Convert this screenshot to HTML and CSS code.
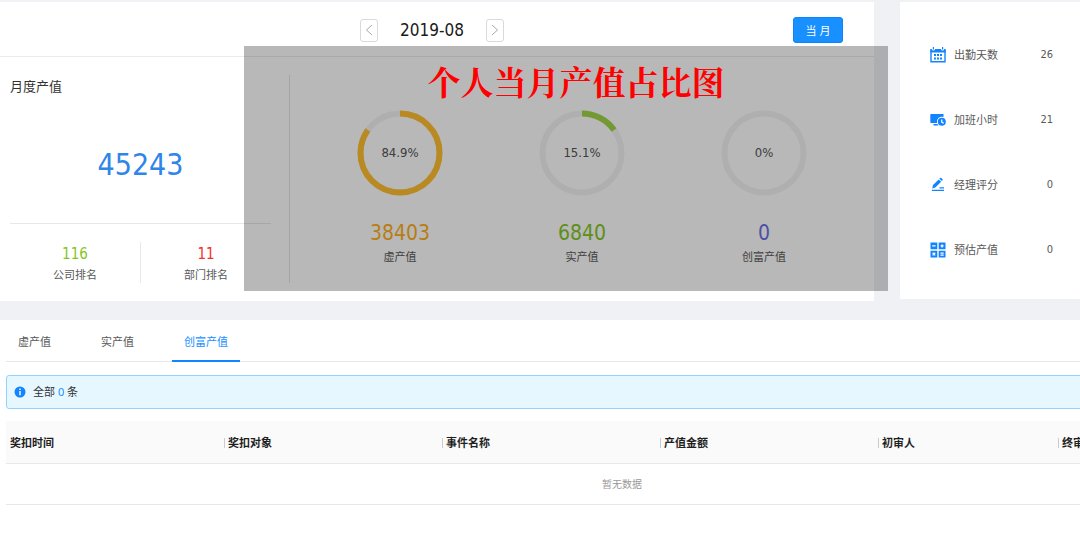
FILE: index.html
```html
<!DOCTYPE html>
<html lang="zh-CN">
<head>
<meta charset="utf-8">
<title>月度产值</title>
<meta name="viewport" content="width=device-width, initial-scale=1">
<link rel="stylesheet" href="styles.css">
</head>
<body>
<div class="top">
  <main class="card summary">
    <header class="month-bar">
      <div class="month-nav">
        <button class="arrow" type="button" aria-label="上个月"><svg width="10" height="14" viewBox="0 0 10 14"><path d="M8 2 2.500 7 8 12"/></svg></button>
        <h1 class="month">2019-08</h1>
        <button class="arrow" type="button" aria-label="下个月"><svg width="10" height="14" viewBox="0 0 10 14"><path d="M2 2 7.500 7 2 12"/></svg></button>
      </div>
      <button class="current" type="button">当 月</button>
    </header>
    <div class="summary-body">
      <section class="total">
        <h2 class="total-title">月度产值</h2>
        <div class="total-value">45243</div>
        <div class="ranks">
          <div class="rank"><b class="rank-value green">116</b><span>公司排名</span></div>
          <div class="rank"><b class="rank-value red">11</b><span>部门排名</span></div>
        </div>
      </section>
      <section class="rings">
        <div class="ring-item">
          <div class="ring">
            <svg viewBox="0 0 86 86"><circle class="track" cx="43" cy="43" r="39.500"/><circle class="arc arc-gold" cx="43" cy="43" r="39.500" pathLength="100" stroke-dasharray="84.900 100"/></svg>
            <span class="percent">84.9%</span>
          </div>
          <b class="ring-value gold">38403</b><span>虚产值</span>
        </div>
        <div class="ring-item">
          <div class="ring">
            <svg viewBox="0 0 86 86"><circle class="track" cx="43" cy="43" r="39.500"/><circle class="arc arc-green" cx="43" cy="43" r="39.500" pathLength="100" stroke-dasharray="15.100 100"/></svg>
            <span class="percent">15.1%</span>
          </div>
          <b class="ring-value green">6840</b><span>实产值</span>
        </div>
        <div class="ring-item">
          <div class="ring">
            <svg viewBox="0 0 86 86"><circle class="track" cx="43" cy="43" r="39.500"/></svg>
            <span class="percent">0%</span>
          </div>
          <b class="ring-value indigo">0</b><span>创富产值</span>
        </div>
      </section>
    </div>
    <div class="highlight">个人当月产值占比图</div>
  </main>
  <aside class="card facts">
    <div class="fact">
      <svg class="icon" viewBox="0 0 16 16"><path fill="none" stroke="currentColor" stroke-width="1.400" d="M1 2.600V14.700H15V2.600"/><path d="M.4 2h1.400a1.600 1.600 0 0 0 3.200 0h6a1.600 1.600 0 0 0 3.200 0h1.400v3.400H.4zM2.800 0h1.200v2.400H2.800zM12 0h1.200v2.400H12zM4 7h2v2H4zm3 0h2v2H7zm3 0h2v2h-2zM4 10.400h2v2H4zm3 0h2v2H7zm3 0h2v2h-2z"/></svg>
      <span>出勤天数</span><span class="fact-value">26</span>
    </div>
    <div class="fact">
      <svg class="icon" viewBox="0 0 16 16"><path d="M1 2h12.500v3A5 5 0 0 0 7 11H1a.7.700 0 0 1-.7-.7V2.700A.7.700 0 0 1 1 2zM3.500 12h4l.9 1.500H3.500z"/><path fill-rule="evenodd" d="M11.800 5.800a4 4 0 1 1 0 8 4 4 0 0 1 0-8zm-.7 1.800v2.900l2.300 1.200.6-1-1.600-.9V7.600z"/></svg>
      <span>加班小时</span><span class="fact-value">21</span>
    </div>
    <div class="fact">
      <svg class="icon" viewBox="0 0 16 16"><path d="M2 12.700h12V14H2zM9.500 10.200H14v1.200H9.500zM2.200 11.500l.8-3.400L8.700 2.400l2.500 2.300-5.900 5.900zM9.300 1.800l.8-.8a.8.800 0 0 1 1.100 0l1.300 1.200a.8.800 0 0 1 0 1.100l-.7.800z"/></svg>
      <span>经理评分</span><span class="fact-value">0</span>
    </div>
    <div class="fact">
      <svg class="icon" viewBox="0 0 16 16"><path d="M.5.500h6.800v6.800H.5zM8.700.500h6.800v6.800H8.700zM.5 8.700h6.800v6.800H.5zM8.700 8.700h6.800v6.800H8.700z"/><path fill="none" stroke="#fff" stroke-width="1.300" d="M2.200 3.900h3.400M12.100 2.400v3M10.600 3.900h3M2.600 10.800l2.600 2.600M5.200 10.800l-2.600 2.600M10.500 11.200h3.200M10.500 13.200h3.200"/></svg>
      <span>预估产值</span><span class="fact-value">0</span>
    </div>
  </aside>
</div>
<section class="records">
  <nav class="tabs" role="tablist">
    <button class="tab" type="button" role="tab">虚产值</button>
    <button class="tab" type="button" role="tab">实产值</button>
    <button class="tab active" type="button" role="tab" aria-selected="true">创富产值</button>
  </nav>
  <div class="wide">
    <div class="notice">
      <svg class="info" viewBox="0 0 12 12"><circle cx="6" cy="6" r="5.500"/><path d="M5.300 2.600h1.400V4H5.300zM5.300 5h1.400v4.200H5.300z" fill="#fff"/></svg>
      <span>全部 <em>0</em> 条</span>
    </div>
    <table class="table">
      <colgroup><col class="c"><col class="c"><col class="c"><col class="c"><col class="last"><col></colgroup>
      <thead><tr><th>奖扣时间</th><th>奖扣对象</th><th>事件名称</th><th>产值金额</th><th>初审人</th><th>终审人</th></tr></thead>
      <tbody><tr><td colspan="6">暂无数据</td></tr></tbody>
    </table>
  </div>
</section>
</body>
</html>
```
FILE: styles.css
```css
* { box-sizing: border-box; }
body {
  margin: 0;
  min-height: 100vh;
  display: flex;
  flex-direction: column;
  overflow-x: hidden;
  background: #f0f1f5;
  color: #595959;
  font: 11px/16px "Noto Sans", "Noto Sans CJK SC", sans-serif;
}
button { font: inherit; cursor: pointer; }
h1, h2 { margin: 0; font-weight: 400; }
b, em { font-weight: 400; font-style: normal; }
.month, .total-value, .rank-value, .ring-value, .percent, .fact-value {
  font-family: "DejaVu Sans Condensed", "Noto Sans", sans-serif;
}
.card { background: #fff; }
.top {
  display: flex;
  align-items: flex-start;
  gap: 26px;
  padding-top: 2px;
}

.summary { position: relative; flex: 1; min-width: 0; }
.month-bar {
  display: grid;
  grid-template-columns: 1fr auto 1fr;
  align-items: center;
  height: 55px;
  padding: 2px 31px 0 21px;
  border-bottom: 1px solid #ebebeb;
}
.month-nav {
  grid-column: 2;
  display: flex;
  align-items: center;
  gap: 22px;
}
.month { color: #1a1a1a; font-size: 17px; line-height: 24px; }
.arrow {
  display: grid;
  place-items: center;
  width: 18px;
  height: 23px;
  padding: 0;
  border: 1px solid #d9d9d9;
  border-radius: 3px;
  background: #fff;
}
.arrow path { fill: none; stroke: #a6a6a6; stroke-width: 1; }
.current {
  justify-self: end;
  width: 50px;
  height: 26px;
  padding: 2px 0 0;
  border: 1px solid #0a85ff;
  border-radius: 3px;
  background: #1890ff;
  color: #fff;
}

.summary-body { display: flex; padding: 18px 19px 18px 10px; }
.total { width: 261px; display: flex; flex-direction: column; }
.total-title { color: #333; font-size: 13px; line-height: 22px; }
.total-value {
  padding: 38px 0 28px;
  color: #2f86e8;
  font-size: 30px;
  line-height: 60px;
  text-align: center;
  border-bottom: 1px solid #e8e8e8;
}
.ranks { display: flex; padding-top: 18px; }
.rank {
  flex: 1;
  display: flex;
  flex-direction: column;
  align-items: center;
  height: 41px;
}
.rank + .rank { border-left: 1px solid #e8e8e8; }
.rank-value { font-size: 15px; line-height: 25px; }
.green { color: #83c625; }
.red { color: #f5302d; }
.gold { color: #ffae18; }
.indigo { color: #6a70e8; }

.rings {
  flex: 1;
  display: grid;
  grid-template-columns: repeat(3, 1fr);
  margin-left: 18px;
  padding: 35px 0 0 19px;
  border-left: 1px solid #e4e4e4;
}
.ring-item { display: flex; flex-direction: column; align-items: center; }
.ring { display: grid; width: 86px; height: 86px; margin-bottom: 22px; }
.ring svg, .percent { grid-area: 1 / 1; }
.ring svg { width: 86px; height: 86px; transform: rotate(-90deg); }
.ring circle { fill: none; stroke-width: 6; }
.track { stroke: #f3f3f3; }
.arc-gold { stroke: #ffbf2f; }
.arc-green { stroke: #a0d646; }
.percent { place-self: center; color: #555; font-size: 13px; }
.ring-value { font-size: 21px; line-height: 31px; }

/* Translucent callout drawn above the ring charts */
.highlight {
  position: absolute;
  top: 44px;
  right: -14px;
  bottom: 10px;
  left: 244px;
  padding-left: 20px;
  background: rgba(0, 0, 0, 0.28);
  color: #f00;
  font: 700 33px/69px "Noto Serif CJK SC", "Noto Sans CJK SC", serif;
  text-align: center;
}

.facts { width: 180px; padding: 20px 27px 17px 30px; }
.fact { display: flex; align-items: center; height: 65px; }
.icon { width: 16px; height: 16px; margin-right: 8px; fill: #1284ff; color: #1284ff; }
.fact-value { margin-left: auto; }

.records {
  flex: 1;
  margin-top: 19px;
  padding-left: 6px;
  background: #fff;
  overflow: hidden;
}
.tabs { display: flex; gap: 26px; border-bottom: 1px solid #e8e8e8; }
.tab {
  height: 42px;
  margin-bottom: -1px;
  padding: 4px 12px 0;
  border: 0;
  border-bottom: 2px solid transparent;
  background: none;
  color: #595959;
}
.tab.active { color: #1890ff; border-color: #1284ff; }
.wide { width: 1232px; padding-top: 13px; }
.notice {
  display: flex;
  align-items: center;
  gap: 7px;
  height: 34px;
  margin-bottom: 12px;
  padding-left: 7px;
  border: 1px solid #91d5ff;
  border-radius: 3px;
  background: #e6f7ff;
  color: #333;
}
.notice em { color: #1890ff; }
.info { width: 12px; height: 12px; fill: #1284ff; }
.table { width: 100%; table-layout: fixed; border-collapse: collapse; }
.c { width: 218px; }
.last { width: 180px; }
.table th {
  height: 42px;
  padding: 2px 4px 0;
  background: #fafafa;
  border-bottom: 1px solid #e8e8e8;
  color: #1f1f1f;
  font-weight: 700;
  text-align: left;
}
.table th + th::before {
  content: "";
  display: inline-block;
  width: 1px;
  height: 10px;
  margin-right: 3px;
  background: #ccc;
  vertical-align: -1px;
}
.table th + th { padding-left: 0; }
.table td {
  height: 41px;
  padding: 0;
  border-bottom: 1px solid #e8e8e8;
  color: #999;
  font-size: 10px;
  text-align: center;
}
```
